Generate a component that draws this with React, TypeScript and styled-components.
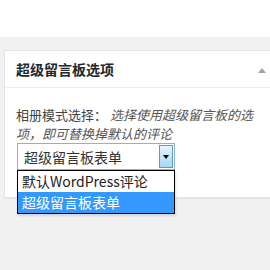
import React from 'react';
import styled, { createGlobalStyle } from 'styled-components';

const GlobalStyle = createGlobalStyle`
  html, body {
    margin: 0;
    padding: 0;
    background: #fff;
  }
  body {
    font-family: 'Noto Sans CJK SC', 'Noto Sans', sans-serif;
    overflow: hidden;
  }
`;

const StyledPage = styled.div`
  width: 270px;
  height: 270px;
  overflow: hidden;
  display: flex;
  flex-direction: column;
`;

const StyledTopStrip = styled.div`
  height: 37px;
  background: #fff;
  flex-shrink: 0;
`;

const StyledWorkArea = styled.div`
  flex: 1;
  background: #f1f1f1;
  padding: 13px 0 0 4px;
`;

const StyledPanel = styled.div`
  width: 272px;
  background: #fff;
  border: 1px solid #e5e5e5;
  box-shadow: 0 1px 1px rgba(0, 0, 0, 0.04);
  box-sizing: border-box;
`;

const StyledHeader = styled.div`
  height: 36px;
  display: flex;
  align-items: center;
  justify-content: space-between;
  padding: 0 9px 0 11px;
  border-bottom: 1px solid #eee;
`;

const StyledTitle = styled.h2`
  margin: 0;
  font-size: 14px;
  font-weight: 700;
  color: #23282d;
  line-height: 1;
`;

const StyledToggle = styled.span`
  width: 0;
  height: 0;
  border-left: 4px solid transparent;
  border-right: 4px solid transparent;
  border-bottom: 5px solid #a0a5aa;
  margin-top: 2px;
`;

const StyledBody = styled.div`
  padding: 17px 12px 27px 11px;
`;

const StyledDesc = styled.p`
  margin: 0;
  font-size: 13px;
  line-height: 19px;
  color: #444;
`;

const StyledHint = styled.em`
  font-style: italic;
  color: #555;
`;

const StyledSelectWrap = styled.div`
  position: relative;
  width: 158px;
  margin-left: 1px;
`;

const StyledSelect = styled.div`
  height: 27px;
  box-sizing: border-box;
  border: 1px solid #8fb0d6;
  display: flex;
  align-items: center;
  justify-content: space-between;
  padding: 1px 1px 1px 6px;
  font-size: 14px;
  color: #333;
`;

const StyledButton = styled.span`
  width: 14px;
  height: 23px;
  box-sizing: border-box;
  border: 1px solid #5a9bd1;
  background: linear-gradient(#e9f5fd, #c3e4f8 50%, #a9d8f4);
  display: flex;
  align-items: center;
  justify-content: center;
`;

const StyledArrow = styled.span`
  width: 0;
  height: 0;
  border-left: 3.5px solid transparent;
  border-right: 3.5px solid transparent;
  border-top: 4px solid #000;
`;

const StyledList = styled.ul`
  position: absolute;
  left: 0;
  top: 27px;
  width: 158px;
  box-sizing: border-box;
  margin: 0;
  padding: 0;
  list-style: none;
  background: #fff;
  border: 1px solid #000;
  box-shadow: 1px 2px 2px rgba(0, 0, 0, 0.12);
`;

const StyledOption = styled.li<{ $active?: boolean }>`
  height: 21px;
  line-height: 21px;
  padding: 0 4px;
  font-size: 14px;
  color: ${(p) => (p.$active ? '#fff' : '#222')};
  background: ${(p) => (p.$active ? '#3399ff' : 'transparent')};
  white-space: nowrap;
`;

const options = ['默认WordPress评论', '超级留言板表单'];

const App: React.FC = () => (
  <>
    <GlobalStyle />
    <StyledPage>
      <StyledTopStrip />
      <StyledWorkArea>
        <StyledPanel>
          <StyledHeader>
            <StyledTitle>超级留言板选项</StyledTitle>
            <StyledToggle />
          </StyledHeader>
          <StyledBody>
            <StyledDesc>
              相册模式选择： <StyledHint>选择使用超级留言板的选项，即可替换掉默认的评论</StyledHint>
            </StyledDesc>
            <StyledSelectWrap>
              <StyledSelect>
                超级留言板表单
                <StyledButton>
                  <StyledArrow />
                </StyledButton>
              </StyledSelect>
              <StyledList>
                {options.map((o, i) => (
                  <StyledOption key={o} $active={i === 1}>
                    {o}
                  </StyledOption>
                ))}
              </StyledList>
            </StyledSelectWrap>
          </StyledBody>
        </StyledPanel>
      </StyledWorkArea>
    </StyledPage>
  </>
);

export default App;
